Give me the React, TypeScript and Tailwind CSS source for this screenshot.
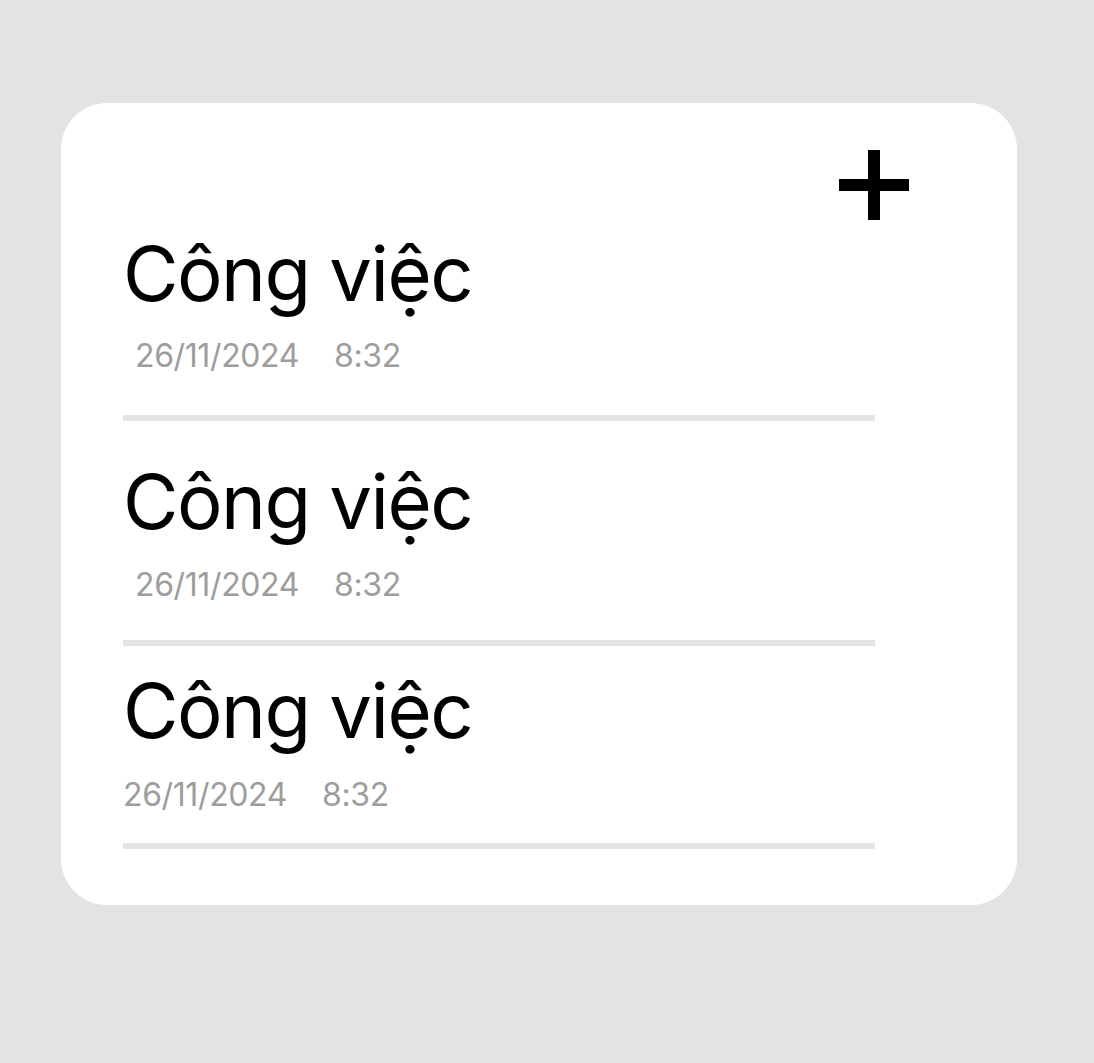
import React from 'react';

// ─── Data ─────────────────────────────────────────────────────────────────────

interface Task {
  title: string;
  date: string;
  time: string;
  indent: boolean;
  titleGap: string;
  dateGap: string;
  lineGap: string;
}

const TASKS: Task[] = [
  { title: 'Công việc', date: '26/11/2024', time: '8:32', indent: true, titleGap: 'mt-[15px]', dateGap: 'mt-[29px]', lineGap: 'mt-[43px]' },
  { title: 'Công việc', date: '26/11/2024', time: '8:32', indent: true, titleGap: 'mt-[42px]', dateGap: 'mt-[30px]', lineGap: 'mt-[39px]' },
  { title: 'Công việc', date: '26/11/2024', time: '8:32', indent: false, titleGap: 'mt-[26px]', dateGap: 'mt-[31px]', lineGap: 'mt-[32px]' },
];

// ─── Row ──────────────────────────────────────────────────────────────────────

function TaskRow({ task }: { task: Task }) {
  return (
    <div>
      <h2 className={`${task.titleGap} text-[76px] leading-none font-normal tracking-[-0.02em] text-black`}>
        {task.title}
      </h2>
      <div
        className={`${task.dateGap} flex text-[32px] leading-none tracking-[-0.012em] text-[#9d9d9d] ${task.indent ? 'pl-[12px]' : ''}`}
      >
        <span>{task.date}</span>
        <span className="ml-[35px]">{task.time}</span>
      </div>
      <div className={`${task.lineGap} h-[6px] w-[752px] bg-[#e4e4e4]`} />
    </div>
  );
}

// ─── Page ─────────────────────────────────────────────────────────────────────

export default function App() {
  return (
    <div
      className="min-h-screen w-full bg-[#e3e3e3] pt-[103px] pl-[61px]"
      style={{ fontFamily: 'Inter, "Noto Sans", sans-serif' }}
    >
      <div className="h-[802px] w-[956px] rounded-[46px] bg-white pt-[47px] pl-[62px] pr-[108px]">
        {/* Add button */}
        <div className="flex justify-end">
          <button type="button" className="h-[70px] w-[70px]" aria-label="Thêm">
            <svg viewBox="0 0 70 70" width="70" height="70">
              <rect x="29" y="0" width="12" height="70" fill="#000" />
              <rect x="0" y="29" width="70" height="12" fill="#000" />
            </svg>
          </button>
        </div>

        {TASKS.map((t, i) => (
          <TaskRow key={i} task={t} />
        ))}
      </div>
    </div>
  );
}
